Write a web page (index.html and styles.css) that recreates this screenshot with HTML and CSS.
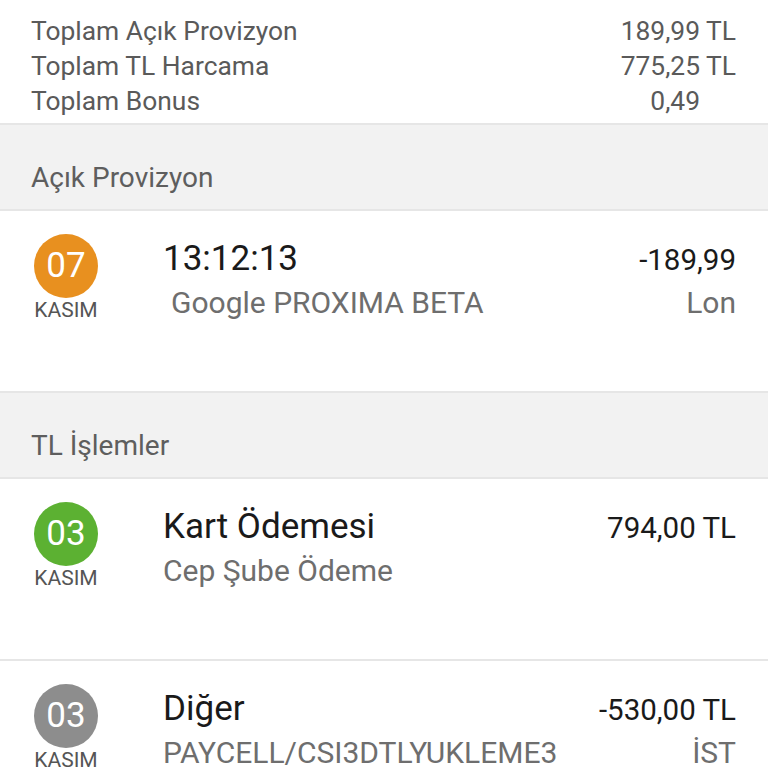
FILE: index.html
```html
<!DOCTYPE html>
<html lang="tr">

<head>
    <meta charset="UTF-8">
    <meta name="viewport" content="width=device-width, initial-scale=1.0">
    <title>Hesap Hareketleri</title>
    <link rel="stylesheet" href="styles.css">
</head>

<body>
    <div class="summary">
        <div class="sum-row"><span>Toplam Açık Provizyon</span><span>189,99 TL</span></div>
        <div class="sum-row"><span>Toplam TL Harcama</span><span>775,25 TL</span></div>
        <div class="sum-row"><span>Toplam Bonus</span><span>0,49<span class="ghost"> TL</span></span></div>
    </div>

    <div class="section-head">Açık Provizyon</div>

    <div class="tx">
        <div class="date">
            <div class="day orange">07</div>
            <div class="month">KASIM</div>
        </div>
        <div class="info">
            <div class="line">
                <span class="title">13:12:13</span>
                <span class="amount">-189,99</span>
            </div>
            <div class="line sub">
                <span class="desc indent">Google PROXIMA BETA</span>
                <span class="place">Lon</span>
            </div>
        </div>
    </div>

    <div class="section-head">TL İşlemler</div>

    <div class="tx">
        <div class="date">
            <div class="day green">03</div>
            <div class="month">KASIM</div>
        </div>
        <div class="info">
            <div class="line">
                <span class="title">Kart Ödemesi</span>
                <span class="amount">794,00 TL</span>
            </div>
            <div class="line sub">
                <span class="desc">Cep Şube Ödeme</span>
                <span class="place"></span>
            </div>
        </div>
    </div>

    <div class="tx last">
        <div class="date">
            <div class="day grey">03</div>
            <div class="month">KASIM</div>
        </div>
        <div class="info">
            <div class="line">
                <span class="title">Diğer</span>
                <span class="amount">-530,00 TL</span>
            </div>
            <div class="line sub">
                <span class="desc">PAYCELL/CSI3DTLYUKLEME3</span>
                <span class="place">İST</span>
            </div>
        </div>
    </div>
</body>

</html>
```

FILE: styles.css
```css
body {
    margin: 0;
    background: #fff;
    font-family: Roboto, "Noto Sans", sans-serif;
    overflow: hidden;
}

.summary {
    padding: 14px 32px 4px 31px;
    border-bottom: 2px solid #e6e6e6;
}

.sum-row {
    display: flex;
    justify-content: space-between;
    font-size: 26.4px;
    line-height: 35px;
    color: #5a5a5a;
}

.ghost {
    visibility: hidden;
}

.section-head {
    background: #f2f2f2;
    height: 86px;
    box-sizing: border-box;
    padding: 37px 31px 0;
    font-size: 28px;
    line-height: 32px;
    color: #5e5e5e;
    border-bottom: 2px solid #e6e6e6;
}

.tx {
    display: flex;
    height: 182px;
    box-sizing: border-box;
    padding: 23px 32px 0 34px;
    border-bottom: 2px solid #e6e6e6;
}

.date {
    width: 64px;
    display: flex;
    flex-direction: column;
    align-items: center;
}

.day {
    width: 64px;
    height: 64px;
    border-radius: 50%;
    color: #fff;
    font-size: 35px;
    line-height: 64px;
    text-align: center;
}

.orange {
    background: #e8901f;
}

.green {
    background: #5cb132;
}

.grey {
    background: #8d8d8d;
}

.month {
    font-size: 21px;
    line-height: 24px;
    color: #555;
}

.info {
    flex: 1;
    padding-left: 65px;
    padding-top: 2px;
}

.line {
    display: flex;
    justify-content: space-between;
    align-items: baseline;
}

.title {
    font-size: 35px;
    line-height: 46px;
    color: #1a1a1a;
}

.amount {
    font-size: 29.5px;
    color: #1a1a1a;
}

.sub {
    font-size: 30px;
    line-height: 42px;
    color: #6e6e6e;
}

.indent {
    padding-left: 8px;
}
```
